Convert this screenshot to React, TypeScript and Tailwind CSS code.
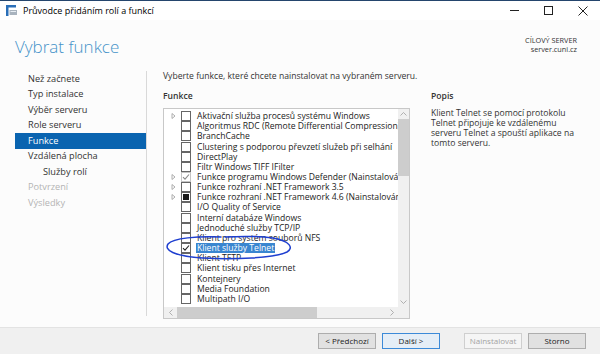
import React from "react";

type Item = { label: string; arrow?: boolean; state?: "none" | "checked" | "grayCheck" | "partial" | "telnet" };

const items: Item[] = [
  { label: "Aktivační služba procesů systému Windows", arrow: true },
  { label: "Algoritmus RDC (Remote Differential Compression)" },
  { label: "BranchCache" },
  { label: "Clustering s podporou převzetí služeb při selhání" },
  { label: "DirectPlay" },
  { label: "Filtr Windows TIFF IFilter" },
  { label: "Funkce programu Windows Defender (Nainstalováno)", arrow: true, state: "grayCheck" },
  { label: "Funkce rozhraní .NET Framework 3.5", arrow: true },
  { label: "Funkce rozhraní .NET Framework 4.6 (Nainstalováno)", arrow: true, state: "partial" },
  { label: "I/O Quality of Service" },
  { label: "Interní databáze Windows" },
  { label: "Jednoduché služby TCP/IP" },
  { label: "Klient pro systém souborů NFS" },
  { label: "Klient služby Telnet", state: "telnet" },
  { label: "Klient TFTP" },
  { label: "Klient tisku přes Internet" },
  { label: "Kontejnery" },
  { label: "Media Foundation" },
  { label: "Multipath I/O" },
];

const nav: { label: string; active?: boolean; disabled?: boolean; indent?: boolean }[] = [
  { label: "Než začnete" },
  { label: "Typ instalace" },
  { label: "Výběr serveru" },
  { label: "Role serveru" },
  { label: "Funkce", active: true },
  { label: "Vzdálená plocha" },
  { label: "Služby rolí", indent: true },
  { label: "Potvrzení", disabled: true },
  { label: "Výsledky", disabled: true },
];

function Check({ state }: { state?: Item["state"] }) {
  const gray = state === "grayCheck";
  return (
    <div
      className={`w-[10px] h-[10px] border flex items-center justify-center bg-white shrink-0 ${
        gray ? "border-[#c4c4c4]" : "border-[#666]"
      }`}
    >
      {(state === "telnet" || state === "checked" || gray) && (
        <svg width="8" height="8" viewBox="0 0 8 8">
          <path d="M1 4.2 L3 6.2 L7 1.5" fill="none" stroke={gray ? "#8a8a8a" : "#222"} strokeWidth="1.1" />
        </svg>
      )}
      {state === "partial" && <div className="w-[6px] h-[6px] bg-[#1a1a1a]" />}
    </div>
  );
}

export default function App() {
  return (
    <div
      className="w-[600px] h-[354px] bg-white flex flex-col overflow-hidden relative text-[#1e1e1e]"
      style={{ fontFamily: '"Open Sans", "Noto Sans", sans-serif' }}
    >
      <div className="h-[1px] bg-[#24456d]" />
      {/* title bar */}
      <div className="h-[19px] flex items-center bg-white">
        <svg className="ml-[6px]" width="11" height="11" viewBox="0 0 11 11">
          <rect x="0" y="0" width="2.5" height="11" fill="#2a6fb8" />
          <rect x="0" y="0" width="10" height="2.5" fill="#2a6fb8" />
          <rect x="3.5" y="5" width="7.5" height="5" fill="#a9b4bf" />
          <rect x="4.5" y="6" width="5.5" height="1" fill="#e8eef4" />
        </svg>
        <span className="ml-[6px] text-[9px] text-black">Průvodce přidáním rolí a funkcí</span>
        <div className="ml-auto flex items-center h-full">
          <div className="w-[34px] flex justify-center">
            <div className="w-[9px] h-[1px] bg-[#222]" />
          </div>
          <div className="w-[34px] flex justify-center">
            <div className="w-[9px] h-[9px] border border-[#222]" />
          </div>
          <div className="w-[35px] flex justify-center">
            <svg width="10" height="10" viewBox="0 0 10 10">
              <path d="M0.5 0.5 L9.5 9.5 M9.5 0.5 L0.5 9.5" stroke="#222" strokeWidth="1" />
            </svg>
          </div>
        </div>
      </div>
      {/* header */}
      <div className="h-[49px] flex bg-[#fcfcfc]">
        <div className="pl-[15px] pt-[14px] text-[17px] font-light text-[#4593c9] leading-[26px]">Vybrat funkce</div>
        <div className="ml-auto pr-[23px] pt-[16px] flex flex-col items-end text-[7.3px] leading-[9px] text-[#333]">
          <span>CÍLOVÝ SERVER</span>
          <span>server.cuni.cz</span>
        </div>
      </div>
      {/* body */}
      <div className="flex-1 flex bg-[#fcfcfc]">
        <div className="w-[147px] pb-[11px] pt-[2px] flex flex-col">
          <div className="flex-1 border-r border-[#d9d9d9] pl-[15px]">
            {nav.map((n) => (
              <div
                key={n.label}
                className={`h-[15.5px] flex items-center text-[9.2px] ${
                  n.active ? "bg-[#0a64b0] text-white" : n.disabled ? "text-[#b4b4b4]" : "text-[#333]"
                } ${n.indent ? "pl-[28px]" : "pl-[13px]"}`}
              >
                {n.label}
              </div>
            ))}
          </div>
        </div>
        <div className="flex-1 pl-[16px] pr-[18px] flex">
          <div className="w-[247px] flex flex-col shrink-0">
            <div className="h-[14px] flex items-center text-[8.6px] text-[#333] whitespace-nowrap">
              Vyberte funkce, které chcete nainstalovat na vybraném serveru.
            </div>
            <div className="h-[11px] mt-[8px] flex items-center text-[8.6px] font-semibold text-[#333]">Funkce</div>
            <div className="mt-[6px] h-[211px] border border-[#c8c8c8] bg-white flex flex-col">
              <div className="flex-1 flex min-h-0">
                <div className="flex-1 overflow-hidden pt-[2px] relative">
                  {items.map((it) => (
                    <div key={it.label} className="h-[10.17px] flex items-center whitespace-nowrap">
                      <div className="w-[17px] flex justify-center pl-[1px] shrink-0">
                        {it.arrow && (
                          <svg width="5" height="6" viewBox="0 0 5 6">
                            <path d="M1 0.5 L4 3 L1 5.5 Z" fill="none" stroke="#9a9a9a" strokeWidth="0.8" />
                          </svg>
                        )}
                      </div>
                      <Check state={it.state} />
                      <span
                        className={`ml-[5px] text-[8.6px] leading-[10px] px-[1px] ${
                          it.state === "telnet" ? "bg-[#3a86d0] text-white" : "text-[#222]"
                        }`}
                      >
                        {it.label}
                      </span>
                    </div>
                  ))}
                </div>
                <div className="w-[11px] bg-[#f0f0f0] flex flex-col items-center shrink-0">
                  <div className="h-[10px] flex items-center justify-center">
                    <svg width="7" height="4" viewBox="0 0 7 4">
                      <path d="M0.5 3.5 L3.5 0.5 L6.5 3.5" fill="none" stroke="#a0a0a0" strokeWidth="0.8" />
                    </svg>
                  </div>
                  <div className="w-[11px] h-[57px] bg-[#cdcdcd]" />
                  <div className="flex-1" />
                  <div className="h-[10px] flex items-center justify-center">
                    <svg width="7" height="4" viewBox="0 0 7 4">
                      <path d="M0.5 0.5 L3.5 3.5 L6.5 0.5" fill="none" stroke="#a0a0a0" strokeWidth="0.8" />
                    </svg>
                  </div>
                </div>
              </div>
              <div className="h-[11px] flex bg-[#f0f0f0]">
                <div className="w-[13px] flex items-center justify-center">
                  <svg width="4" height="7" viewBox="0 0 4 7">
                    <path d="M3.5 0.5 L0.5 3.5 L3.5 6.5" fill="none" stroke="#a0a0a0" strokeWidth="0.8" />
                  </svg>
                </div>
                <div className="w-[140px] bg-[#cdcdcd]" />
                <div className="flex-1" />
                <div className="w-[13px] flex items-center justify-center">
                  <svg width="4" height="7" viewBox="0 0 4 7">
                    <path d="M0.5 0.5 L3.5 3.5 L0.5 6.5" fill="none" stroke="#a0a0a0" strokeWidth="0.8" />
                  </svg>
                </div>
                <div className="w-[11px] bg-[#f0f0f0]" />
              </div>
            </div>
          </div>
          <div className="ml-[21px] flex-1 pt-[22px]">
            <div className="h-[11px] flex items-center text-[8.6px] font-semibold text-[#333]">Popis</div>
            <div className="mt-[6px] text-[8.6px] leading-[10px] text-[#333] w-[150px]">
              Klient Telnet se pomocí protokolu Telnet připojuje ke vzdálenému serveru Telnet a spouští aplikace na tomto serveru.
            </div>
          </div>
        </div>
      </div>
      {/* footer */}
      <div className="h-[27px] bg-[#f0f0f0] border-t border-[#e3e3e3] flex items-center pr-[14px]">
        <div className="ml-auto flex items-center text-[8px]">
          <div className="w-[58px] h-[16px] border border-[#adadad] bg-[#e1e1e1] flex items-center justify-center text-[#222]">
            &lt; Předchozí
          </div>
          <div className="ml-[6px] w-[58px] h-[16px] border border-[#3c8ad8] bg-[#e5eef7] flex items-center justify-center text-[#222]">
            Další &gt;
          </div>
          <div className="ml-[24px] w-[58px] h-[16px] border border-[#cfcfcf] bg-[#f5f5f5] flex items-center justify-center text-[#a3a3a3]">
            Nainstalovat
          </div>
          <div className="ml-[6px] w-[58px] h-[16px] border border-[#adadad] bg-[#e1e1e1] flex items-center justify-center text-[#222]">
            Storno
          </div>
        </div>
      </div>
      {/* hand-drawn ellipse */}
      <svg className="absolute left-[163px] top-[233px] pointer-events-none" width="132" height="28" viewBox="0 0 132 28">
        <path
          d="M58 4 C 35 3, 10 5, 5 11 C 1 17, 10 23, 40 25 C 70 27, 112 25, 124 19 C 131 15, 127 8, 110 5 C 95 3, 80 3, 62 4"
          fill="none"
          stroke="#1f3fd0"
          strokeWidth="1.5"
          strokeLinecap="round"
        />
      </svg>
    </div>
  );
}
